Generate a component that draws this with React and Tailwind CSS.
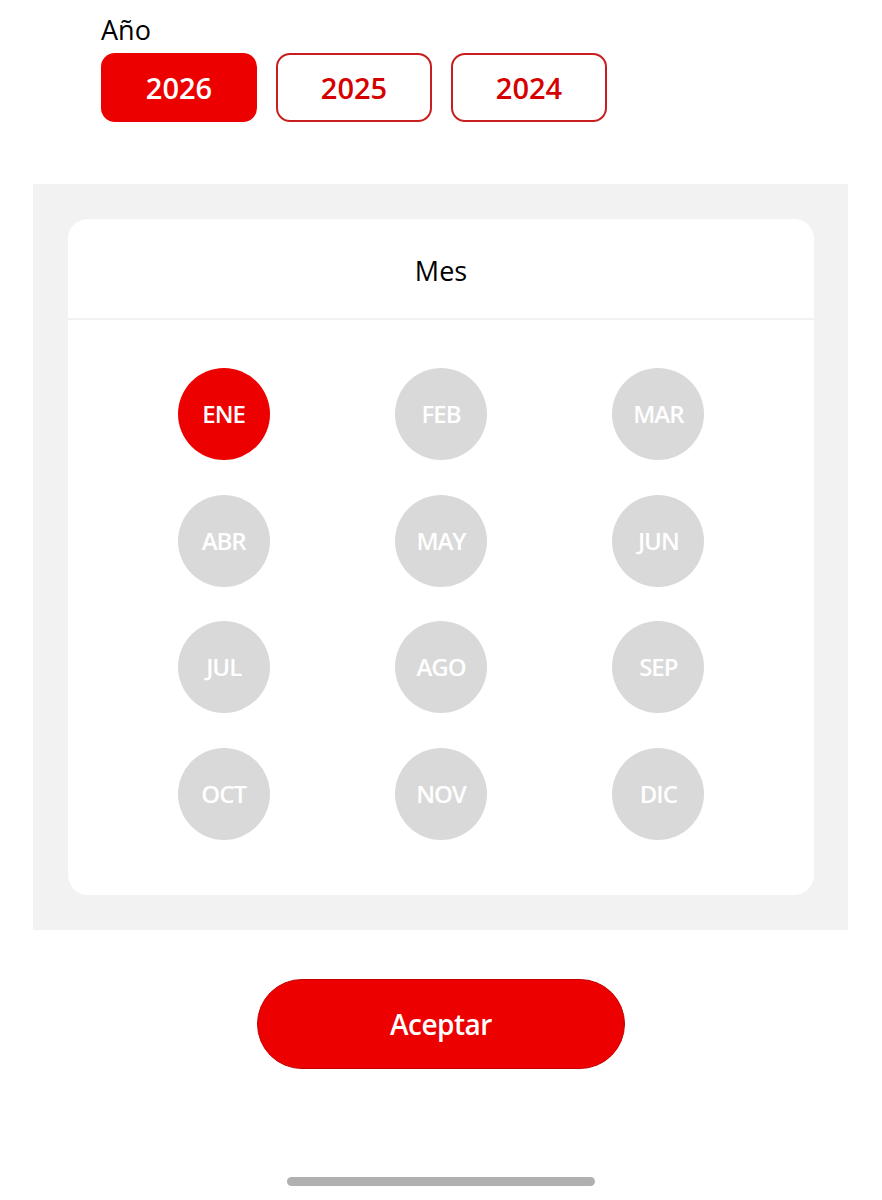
import React from "react";

const months = ["ENE","FEB","MAR","ABR","MAY","JUN","JUL","AGO","SEP","OCT","NOV","DIC"];

export default function App() {
  return (
    <div className="w-[882px] h-[1200px] bg-white flex flex-col" style={{ fontFamily: '"Open Sans", "Noto Sans", sans-serif' }}>
      <div className="pl-[101px] pt-[13px]">
        <div className="text-[27px] leading-[34px] text-black">Año</div>
        <div className="flex gap-[19px] mt-[6px]">
          <button className="w-[156px] h-[69px] rounded-[14px] bg-[#ec0000] text-white text-[29px] font-semibold leading-none">2026</button>
          <button className="w-[156px] h-[69px] rounded-[14px] border-2 border-[#c81e1e] text-[#d50000] text-[29px] font-semibold leading-none">2025</button>
          <button className="w-[156px] h-[69px] rounded-[14px] border-2 border-[#c81e1e] text-[#d50000] text-[29px] font-semibold leading-none">2024</button>
        </div>
      </div>
      <div className="mt-[62px] mx-[33px] w-[815px] h-[746px] bg-[#f2f2f2] p-[35px] pr-[34px]">
        <div className="bg-white rounded-[20px] h-[676px] flex flex-col">
          <div className="h-[101px] flex items-center justify-center pt-[5px] text-[27px] text-black border-b-2 border-[#f2f2f2]">Mes</div>
          <div className="grid grid-cols-3 px-[47px] pt-[48px] gap-y-[34.5px]">
            {months.map((m, i) => (
              <div key={m} className="flex justify-center">
                <div className={`w-[92px] h-[92px] rounded-full flex items-center justify-center text-white text-[24px] font-semibold tracking-[-1px] ${i === 0 ? "bg-[#ec0000]" : "bg-[#d9d9d9]"}`}>
                  {m}
                </div>
              </div>
            ))}
          </div>
        </div>
      </div>
      <div className="flex justify-center mt-[49px]">
        <button className="w-[368px] h-[90px] rounded-full bg-[#ec0000] border border-[#c20000] text-white text-[28px] font-semibold tracking-[-0.5px]">Aceptar</button>
      </div>
      <div className="flex justify-center mt-[108px]">
        <div className="w-[308px] h-[9px] rounded-full bg-[#b0b0b0]"></div>
      </div>
    </div>
  );
}
